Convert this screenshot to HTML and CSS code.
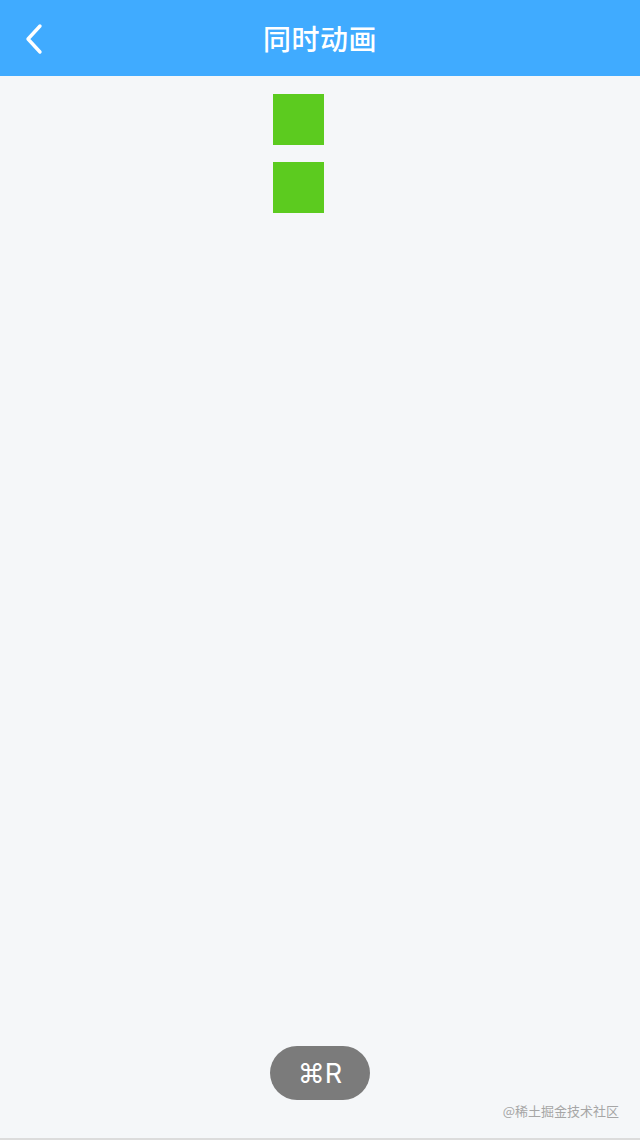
FILE: index.html
```html
<!DOCTYPE html>
<html lang="zh">
<head>
<meta charset="utf-8">
<title>同时动画</title>
<link rel="stylesheet" href="styles.css">
</head>
<body>
<div class="page">
  <header class="nav">
    <button class="back" aria-label="back">
      <svg width="20" height="32" viewBox="0 0 20 32"><path d="M16 3 L4 16 L16 29" fill="none" stroke="#fff" stroke-width="3.4" stroke-linecap="round" stroke-linejoin="round"/></svg>
    </button>
    <h1 class="title">同时动画</h1>
  </header>
  <main class="content">
    <div class="box"></div>
    <div class="box"></div>
  </main>
  <footer class="foot">
    <div class="pill">⌘R</div>
    <div class="mark">@稀土掘金技术社区</div>
  </footer>
</div>
</body>
</html>
```
FILE: styles.css
```css
* { box-sizing: border-box; }
html, body { margin: 0; padding: 0; }
body {
  background: #f5f7f9;
  font-family: "Noto Sans CJK SC", "Noto Sans", sans-serif;
}
.page {
  width: 640px;
  height: 1140px;
  display: flex;
  flex-direction: column;
  border-bottom: 2px solid #dcdcdc;
}
.nav {
  height: 76px;
  background: #40abff;
  display: flex;
  align-items: center;
  justify-content: center;
  position: relative;
}
.back {
  position: absolute;
  left: 24px;
  top: 23px;
  padding: 0;
  border: 0;
  background: none;
  width: 20px;
  height: 32px;
}
.back svg { display: block; }
.title {
  margin: 0;
  color: #fff;
  font-size: 28px;
  font-weight: 500;
  line-height: 1;
  letter-spacing: 0.5px;
}
.content {
  flex: 1;
  display: flex;
  flex-direction: column;
  gap: 17px;
  padding: 18px 0 0 273px;
}
.box {
  width: 51px;
  height: 51px;
  background: #5ccb1f;
}
.foot {
  height: 92px;
  position: relative;
}
.pill {
  position: absolute;
  left: 270px;
  top: 0;
  width: 100px;
  height: 54px;
  border-radius: 27px;
  background: #7b7b7b;
  color: #fff;
  font-family: "Inter", "DejaVu Sans", sans-serif;
  font-size: 27px;
  display: flex;
  align-items: center;
  justify-content: center;
}
.mark {
  position: absolute;
  right: 21px;
  top: 56px;
  color: #a6a6a6;
  font-size: 13px;
  line-height: 18px;
}
```
